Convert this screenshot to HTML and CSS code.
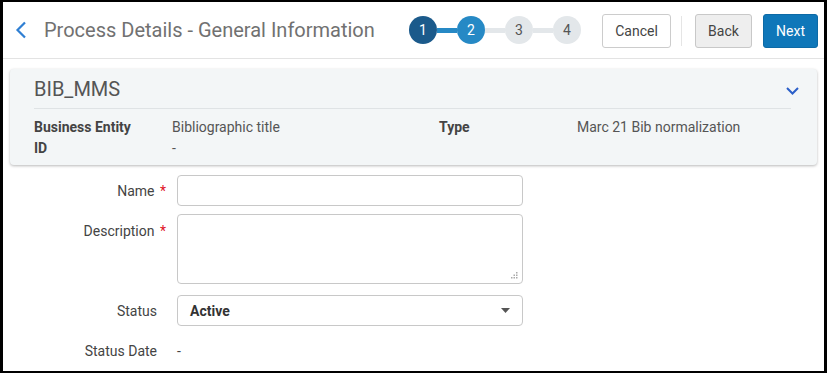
FILE: index.html
```html
<!DOCTYPE html>
<html lang="en">

<head>
    <meta charset="UTF-8">
    <title>Process Details - General Information</title>
    <link rel="stylesheet" href="styles.css">
</head>

<body>

    <header class="page-header">
        <button class="back-link" aria-label="Back">
            <svg width="12" height="18" viewBox="0 0 12 18">
                <path d="M10 1.5 L2.5 9 L10 16.5" fill="none" stroke="#2f7fd3" stroke-width="2.2" />
            </svg>
        </button>
        <h1>Process Details - General Information</h1>

        <ol class="stepper">
            <li class="step done">1</li>
            <li class="line active"></li>
            <li class="step current">2</li>
            <li class="line"></li>
            <li class="step">3</li>
            <li class="line"></li>
            <li class="step">4</li>
        </ol>

        <div class="actions">
            <button class="btn btn-outline">Cancel</button>
            <span class="divider"></span>
            <button class="btn btn-grey">Back</button>
            <button class="btn btn-primary">Next</button>
        </div>
    </header>

    <section class="card">
        <div class="card-head">
            <h2>BIB_MMS</h2>
            <svg class="chevron" width="13" height="8" viewBox="0 0 13 8">
                <path d="M1 1 L6.5 6.5 L12 1" fill="none" stroke="#2b5fc9" stroke-width="2" />
            </svg>
        </div>
        <div class="card-body">
            <div class="info-row">
                <span class="info-label">Business Entity</span>
                <span class="info-value">Bibliographic title</span>
                <span class="info-label">Type</span>
                <span class="info-value">Marc 21 Bib normalization</span>
            </div>
            <div class="info-row">
                <span class="info-label">ID</span>
                <span class="info-value">-</span>
            </div>
        </div>
    </section>

    <form class="form">
        <div class="form-row">
            <label class="form-label required">Name <span class="req">*</span></label>
            <input type="text" class="field">
        </div>
        <div class="form-row top">
            <label class="form-label required">Description <span class="req">*</span></label>
            <div class="area-wrap">
                <textarea class="field area"></textarea>
                <svg class="grip" width="7" height="7" viewBox="0 0 7 7">
                    <rect x="5" y="0" width="1.5" height="1.5" fill="#aaa" />
                    <rect x="2.5" y="2.5" width="1.5" height="1.5" fill="#aaa" />
                    <rect x="5" y="2.5" width="1.5" height="1.5" fill="#aaa" />
                    <rect x="0" y="5" width="1.5" height="1.5" fill="#aaa" />
                    <rect x="2.5" y="5" width="1.5" height="1.5" fill="#aaa" />
                    <rect x="5" y="5" width="1.5" height="1.5" fill="#aaa" />
                </svg>
            </div>
        </div>
        <div class="form-row">
            <label class="form-label">Status</label>
            <div class="field select">
                <span>Active</span>
                <svg width="9" height="5" viewBox="0 0 9 5">
                    <path d="M0 0 L9 0 L4.5 5 Z" fill="#555" />
                </svg>
            </div>
        </div>
        <div class="form-row date-row">
            <label class="form-label">Status Date</label>
            <span class="plain">-</span>
        </div>
    </form>

</body>

</html>
```

FILE: styles.css
```css
* {
    box-sizing: border-box;
}

body {
    font-family: Roboto, "Liberation Sans", sans-serif;
    background-color: #fff;
    color: #444;
    margin: 0;
    height: 373px;
    overflow: hidden;
    border: 2px solid #000;
    border-left-width: 3px;
    border-right-width: 3px;
}

.page-header {
    display: flex;
    align-items: center;
    height: 57px;
    padding: 0 6px 0 10px;
    border-bottom: 1px solid #e3e3e3;
}

.back-link {
    background: none;
    border: none;
    padding: 0;
    width: 16px;
    height: 20px;
    display: flex;
    align-items: center;
    justify-content: center;
    cursor: pointer;
}

.page-header h1 {
    font-size: 20px;
    font-weight: 400;
    color: #717171;
    margin: 0 0 0 15px;
}

.stepper {
    display: flex;
    align-items: center;
    list-style: none;
    margin: 0 0 0 34px;
    padding: 0;
}

.step {
    width: 28px;
    height: 28px;
    border-radius: 50%;
    background-color: #e3e7ea;
    color: #555;
    font-size: 14px;
    display: flex;
    align-items: center;
    justify-content: center;
}

.step.done {
    background-color: #1b5a8b;
    color: #fff;
}

.step.current {
    background-color: #2689c5;
    color: #fff;
}

.line {
    width: 20px;
    height: 5px;
    background-color: #e3e7ea;
}

.line.active {
    background-color: #2689c5;
}

.actions {
    display: flex;
    align-items: center;
    margin-left: auto;
    margin-top: 1px;
}

.btn {
    font-family: inherit;
    font-size: 14px;
    height: 34px;
    padding: 0;
    border-radius: 3px;
    border: 1px solid #ccc;
    cursor: pointer;
}

.btn-outline {
    width: 69px;
    background-color: #fff;
    color: #444;
}

.btn-grey {
    width: 57px;
    background-color: #eeeeee;
    border-color: #c8c8c8;
    color: #444;
}

.btn-primary {
    width: 55px;
    background-color: #0f77b9;
    border-color: #0d6aa6;
    color: #fff;
    margin-left: 11px;
}

.divider {
    width: 1px;
    height: 30px;
    background-color: #e5e5e5;
    margin: 0 13px 0 10px;
}

.card {
    margin: 10px 7px 0 7px;
    background-color: #f3f6f7;
    border-radius: 4px;
    box-shadow: 0 1px 3px rgba(0, 0, 0, 0.28);
    padding: 0 18px 6px 24px;
}

.card-head {
    display: flex;
    align-items: center;
    justify-content: space-between;
    height: 40px;
    border-bottom: 1px solid #dfe3e5;
    margin-right: 8px;
}

.card-head h2 {
    font-size: 20px;
    font-weight: 400;
    color: #555;
    margin: 0;
}

.chevron {
    margin-right: -8px;
    margin-top: 4px;
}

.card-body {
    padding-top: 8px;
}

.info-row {
    display: grid;
    grid-template-columns: 138px 267px 138px 1fr;
    font-size: 14px;
    height: 21px;
    line-height: 21px;
}

.info-label {
    font-weight: 700;
    color: #444;
}

.info-value {
    color: #555;
}

.form {
    padding-top: 10px;
}

.form-row {
    display: flex;
    align-items: center;
    margin-bottom: 8px;
}

.form-row.top {
    align-items: flex-start;
    margin-bottom: 11px;
}

.form-label {
    width: 163px;
    text-align: right;
    font-size: 14px;
    color: #444;
    margin-right: 11px;
    padding-right: 9px;
}

.form-label.required {
    padding-right: 0;
}

.form-row.top .form-label {
    padding-top: 9px;
}

.req {
    color: #e0121f;
    margin-left: 2px;
}

.field {
    width: 346px;
    height: 31px;
    border: 1px solid #c8c8c8;
    border-radius: 4px;
    background-color: #fff;
    font-family: inherit;
    font-size: 14px;
}

.area-wrap {
    position: relative;
}

.area {
    height: 70px;
    display: block;
    resize: none;
}

.grip {
    position: absolute;
    right: 5px;
    bottom: 5px;
}

.select {
    display: flex;
    align-items: center;
    justify-content: space-between;
    padding: 0 12px;
    font-weight: 700;
    color: #333;
}

.date-row {
    margin-top: 17px;
}

.plain {
    font-size: 14px;
    color: #444;
}
```
